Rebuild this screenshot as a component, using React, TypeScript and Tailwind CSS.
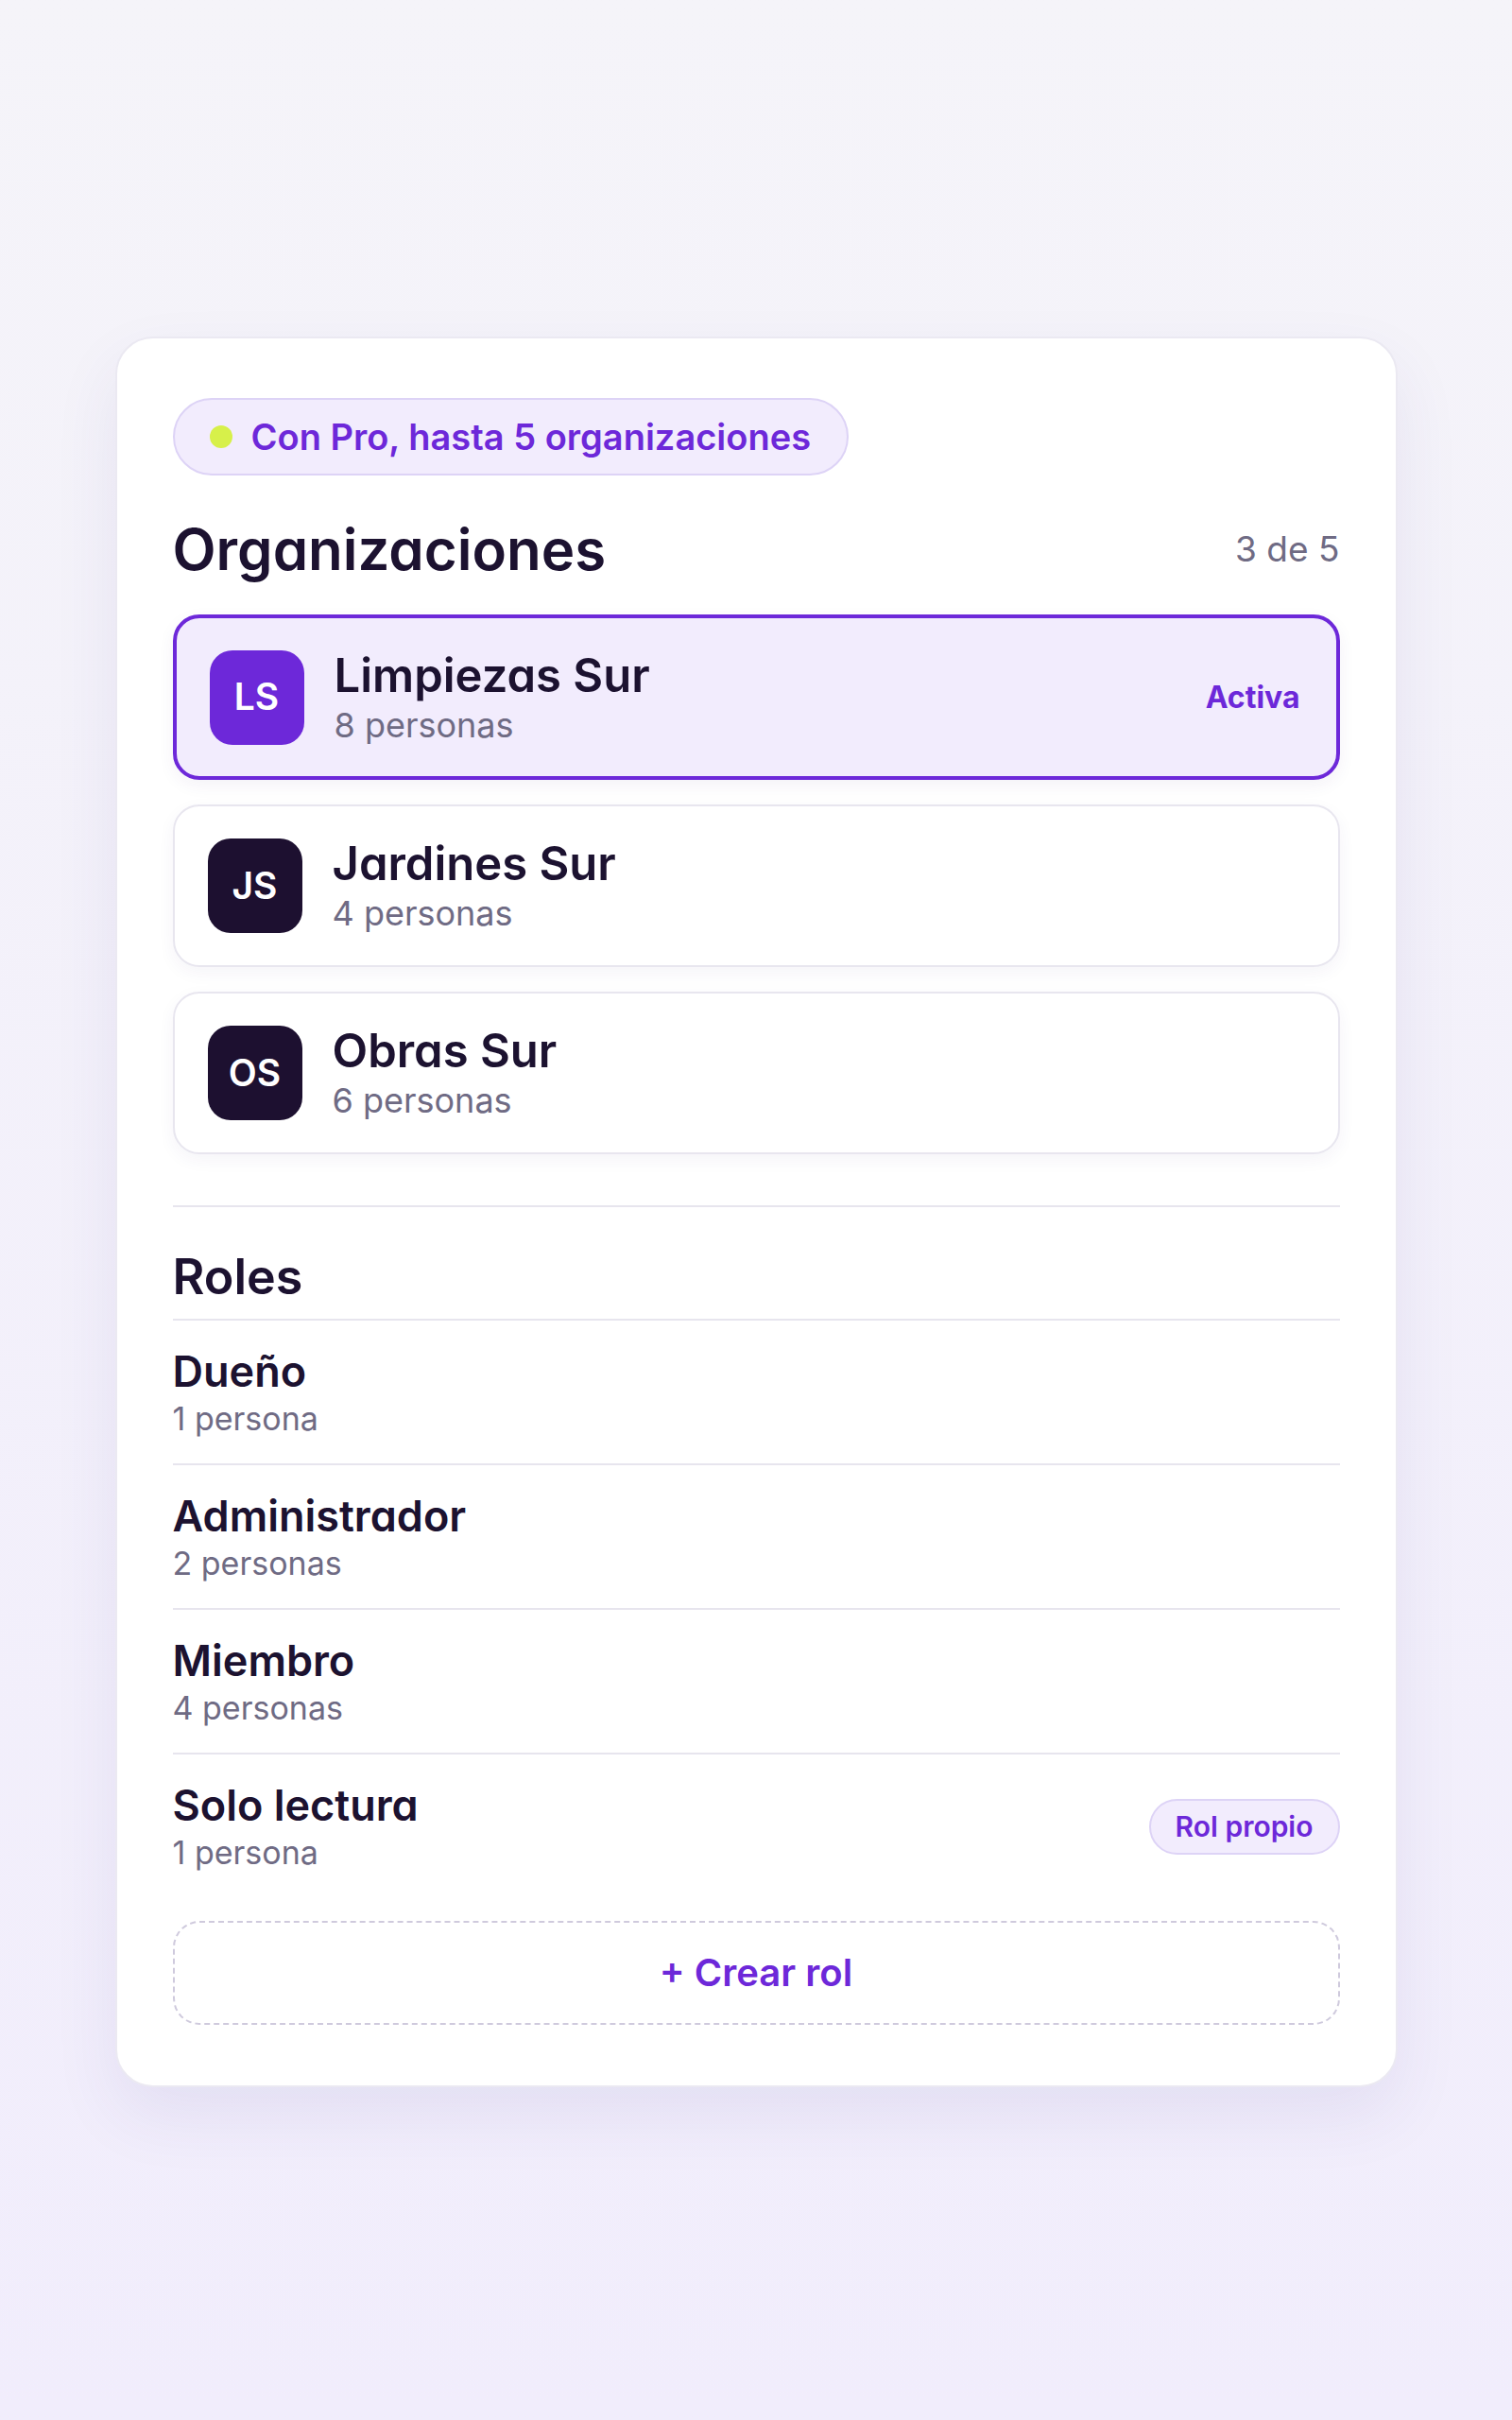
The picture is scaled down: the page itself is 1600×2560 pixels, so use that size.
const orgs = [
  { initials: "LS", name: "Limpiezas Sur", people: "8 personas", active: true },
  { initials: "JS", name: "Jardines Sur", people: "4 personas", active: false },
  { initials: "OS", name: "Obras Sur", people: "6 personas", active: false },
];

const roles = [
  { name: "Dueño", people: "1 persona", custom: false },
  { name: "Administrador", people: "2 personas", custom: false },
  { name: "Miembro", people: "4 personas", custom: false },
  { name: "Solo lectura", people: "1 persona", custom: true },
];

const OrgCard = ({ initials, name, people, active }: (typeof orgs)[number]) => (
  <div
    className={
      active
        ? "flex items-center h-[175px] pl-[35px] pr-[38px] rounded-[28px] border-4 border-[#6d28d9] bg-[#f2ecfd] shadow-[0_6px_18px_rgba(60,40,120,0.06)]"
        : "flex items-center h-[172px] pl-[35px] pr-[38px] rounded-[28px] border-2 border-[#e8e6ef] bg-white shadow-[0_6px_18px_rgba(60,40,120,0.05)]"
    }
  >
    <div
      className={`flex items-center justify-center w-[100px] h-[100px] rounded-[24px] text-white text-[39px] font-semibold ${
        active ? "bg-[#6d28d9]" : "bg-[#1d1030]"
      }`}
    >
      {initials}
    </div>
    <div className="ml-[32px] flex-1">
      <p className="text-[49px] leading-[58px] font-semibold text-[#1c1230] [font-feature-settings:'cv11']">
        {name}
      </p>
      <span className="block text-[36px] leading-[46px] text-[#6f6b84]">{people}</span>
    </div>
    {active && <span className="text-[32px] font-bold text-[#6d28d9]">Activa</span>}
  </div>
);

const App = () => {
  return (
    <div className="min-h-[2560px] w-full bg-gradient-to-b from-[#f5f4f9] to-[#f1edfc] pt-[356px] font-['Inter','Liberation_Sans',sans-serif]">
      <div className="mx-auto w-[1357px] rounded-[40px] border-2 border-[#ebe9f2] bg-white px-[59px] pt-[63px] pb-[64px] shadow-[0_30px_70px_rgba(70,50,140,0.08)]">
        <div className="inline-flex items-center h-[82px] pl-[37px] pr-[38px] rounded-full border-2 border-[#ddd3f6] bg-[#f2ecfd]">
          <span className="w-[24px] h-[24px] rounded-full bg-[#d7f04a]" />
          <span className="ml-[20px] text-[38px] font-semibold text-[#6d28d9]">
            Con Pro, hasta 5 organizaciones
          </span>
        </div>

        <div className="mt-[42px] flex items-center justify-between">
          <h1 className="text-[60px] leading-[72px] font-semibold text-[#1c1230] [font-feature-settings:'cv11']">
            Organizaciones
          </h1>
          <span className="text-[37px] text-[#6f6b84]">3 de 5</span>
        </div>

        <div className="mt-[33px] flex flex-col gap-[26px]">
          {orgs.map((o) => (
            <OrgCard key={o.initials} {...o} />
          ))}
        </div>

        <div className="mt-[54px] border-t-2 border-[#e7e5ee]" />

        <h2 className="pt-[44px] pb-[14px] text-[52px] leading-[60px] font-semibold text-[#1c1230] [font-feature-settings:'cv11']">
          Roles
        </h2>

        {roles.map((r) => (
          <div
            key={r.name}
            className="flex items-center justify-between border-t-2 border-[#e7e5ee] pt-[26px] pb-[25px]"
          >
            <div>
              <p className="text-[45px] leading-[56px] font-semibold text-[#1c1230] [font-feature-settings:'cv11']">
                {r.name}
              </p>
              <span className="block text-[34px] leading-[44px] text-[#6f6b84]">{r.people}</span>
            </div>
            {r.custom && (
              <span className="flex items-center h-[59px] px-[26px] rounded-full border-2 border-[#ddd3f6] bg-[#f2ecfd] text-[30px] font-semibold text-[#6d28d9]">
                Rol propio
              </span>
            )}
          </div>
        ))}

        <button className="mt-[25px] flex w-full items-center justify-center h-[110px] rounded-[28px] border-2 border-dashed border-[#cfcadd] bg-white text-[40px] font-semibold text-[#6d28d9]">
          + Crear rol
        </button>
      </div>
    </div>
  );
};

export default App;
